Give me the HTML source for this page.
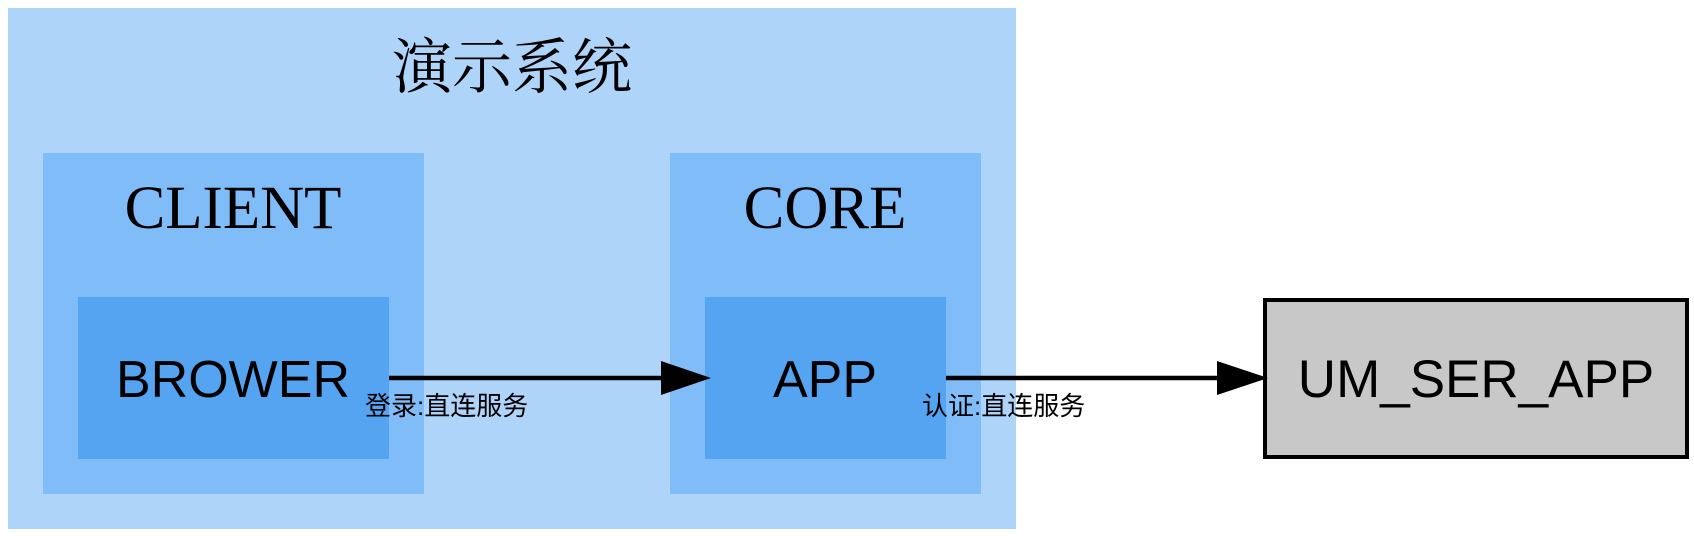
<!DOCTYPE html>
<html><head><meta charset="utf-8"><style>
html,body{margin:0;padding:0;background:#fff;width:1694px;height:536px;overflow:hidden}
svg{display:block}
</style></head><body>
<svg width="1694" height="536" viewBox="0 0 1694 536" xmlns="http://www.w3.org/2000/svg">
<rect x="8" y="8" width="1008" height="521" fill="#afd4f9"/>
<rect x="43" y="153" width="381" height="341" fill="#80bcf8"/>
<rect x="670" y="153" width="311" height="341" fill="#80bcf8"/>
<rect x="78" y="297" width="311" height="162" fill="#55a4f2"/>
<rect x="705" y="297" width="241" height="162" fill="#55a4f2"/>
<rect x="1265" y="300" width="422" height="157" fill="#c8c8c8" stroke="#000" stroke-width="4"/>
<text x="512" y="88" font-family="'Liberation Serif','Noto Serif CJK SC',serif" font-size="60" text-anchor="middle">演示系统</text>
<text x="233" y="228" font-family="'Liberation Serif',serif" font-size="61" text-anchor="middle">CLIENT</text>
<text x="825" y="228" font-family="'Liberation Serif',serif" font-size="61" text-anchor="middle">CORE</text>
<text x="233" y="397" font-family="'Liberation Sans',sans-serif" font-size="52" text-anchor="middle">BROWER</text>
<text x="825" y="397" font-family="'Liberation Sans',sans-serif" font-size="52" text-anchor="middle">APP</text>
<text x="1476" y="397" font-family="'Liberation Sans',sans-serif" font-size="53" text-anchor="middle">UM_SER_APP</text>
<line x1="389" y1="378" x2="663" y2="378" stroke="#000" stroke-width="4.5"/>
<polygon points="661,361 711,378 661,395" fill="#000"/>
<line x1="946" y1="378" x2="1219" y2="378" stroke="#000" stroke-width="4.5"/>
<polygon points="1217,361 1268,378 1217,395" fill="#000"/>
<text x="365" y="415" font-family="'Liberation Sans','Noto Sans CJK SC',sans-serif" font-size="26">登录:直连服务</text>
<text x="922" y="415" font-family="'Liberation Sans','Noto Sans CJK SC',sans-serif" font-size="26">认证:直连服务</text>
</svg>
</body></html>
